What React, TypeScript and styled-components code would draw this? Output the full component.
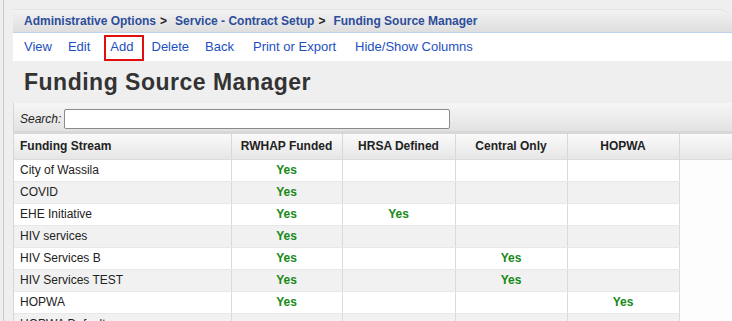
import React from 'react'
import styled, { createGlobalStyle } from 'styled-components'

const GlobalStyle = createGlobalStyle`
  html, body {
    margin: 0;
    padding: 0;
    background: #efefef;
    font-family: 'Liberation Sans', Arial, sans-serif;
    overflow: hidden;
  }
`

const Frame = styled.div`
  margin-left: 3px;
  border-left: 1px solid #c9c9c9;
  padding: 9px 0 0 9px;
  min-height: 321px;
  box-sizing: border-box;
`

const Breadcrumb = styled.div`
  height: 24px;
  display: flex;
  align-items: center;
  padding-left: 11px;
  background: linear-gradient(#f2f2f2, #dedede);
  border-top: 1px solid #e4e4e4;
  border-bottom: 1px solid #bcd3ea;
  border-top-right-radius: 14px;
  box-sizing: border-box;
  font-size: 12px;
  font-weight: bold;
  color: #2c4d9b;
  white-space: nowrap;
`

const Crumb = styled.span`
  color: #2c4d9b;
`

const Sep = styled.span`
  color: #222;
  margin: 0 8px 0 4px;
`

const MenuBar = styled.div`
  height: 28px;
  box-sizing: border-box;
  background: #fff;
  display: flex;
  align-items: flex-start;
  padding: 2px 0 0 6px;
`

const MenuLink = styled.a<{ $boxed?: boolean; $space?: number }>`
  font-size: 13px;
  color: #1d4fbf;
  text-decoration: none;
  line-height: 15px;
  padding: ${({ $boxed }) => ($boxed ? '2px 8px 5px 4px' : '2px 3px 5px')};
  margin: 0 ${({ $space }) => $space ?? 6}px 0 ${({ $boxed }) => ($boxed ? 3 : 0)}px;
  border: 2px solid ${({ $boxed }) => ($boxed ? '#e01010' : 'transparent')};
`

const Title = styled.h1`
  margin: 0;
  padding: 8px 0 0 11px;
  height: 42px;
  box-sizing: border-box;
  font-size: 23px;
  font-weight: bold;
  color: #333;
  letter-spacing: 0.5px;
`

const Panel = styled.div`
  border-left: 1px solid #d6d6d6;
  width: 760px;
`

const SearchBar = styled.div`
  height: 31px;
  display: flex;
  align-items: flex-end;
  padding: 0 0 2px 6px;
  gap: 3px;
  background: linear-gradient(#f6f6f6, #e2e2e2);
  border-bottom: 3px solid #d8d8d8;
  box-sizing: border-box;
  font-size: 12px;
  font-style: italic;
  color: #222;
`

const SearchLabel = styled.span`
  line-height: 20px;
`

const SearchInput = styled.input`
  width: 386px;
  height: 20px;
  box-sizing: border-box;
  border: 1px solid #8a8a8a;
  border-radius: 2px;
  background: #fff;
`

const Table = styled.table`
  border-collapse: collapse;
  table-layout: fixed;
  font-size: 12px;
  color: #222;
`

const HeadCell = styled.th<{ $left?: boolean; $w: number }>`
  width: ${({ $w }) => $w}px;
  height: 25px;
  padding: 0 6px;
  box-sizing: border-box;
  text-align: ${({ $left }) => ($left ? 'left' : 'center')};
  font-weight: bold;
  background: linear-gradient(#fafafa, #e6e6e6);
  border-right: 1px solid #d8d8d8;
  border-bottom: 1px solid #dcdcdc;
`

const Row = styled.tr<{ $odd: boolean }>`
  background: ${({ $odd }) => ($odd ? '#f1f1f1' : '#ffffff')};
`

const Cell = styled.td<{ $left?: boolean }>`
  height: 22px;
  padding: 0 6px;
  box-sizing: border-box;
  text-align: ${({ $left }) => ($left ? 'left' : 'center')};
  border-right: 1px solid #dadada;
  border-bottom: 1px solid #e8e8e8;
  white-space: nowrap;
`

const BlankCell = styled.td`
  background: #fdfdfd;
  border: none;
`

const Yes = styled.span`
  color: #178a17;
  font-weight: bold;
`

const columns = [
  { label: 'Funding Stream', w: 217, left: true },
  { label: 'RWHAP Funded', w: 111 },
  { label: 'HRSA Defined', w: 113 },
  { label: 'Central Only', w: 112 },
  { label: 'HOPWA', w: 112 },
]

const rows: [string, boolean, boolean, boolean, boolean][] = [
  ['City of Wassila', true, false, false, false],
  ['COVID', true, false, false, false],
  ['EHE Initiative', true, true, false, false],
  ['HIV services', true, false, false, false],
  ['HIV Services B', true, false, true, false],
  ['HIV Services TEST', true, false, true, false],
  ['HOPWA', true, false, false, true],
  ['HOPWA Default', false, false, false, false],
]

export default function App() {
  return (
    <>
      <GlobalStyle />
      <Frame>
        <Breadcrumb>
          <Crumb>Administrative Options</Crumb>
          <Sep>&gt;</Sep>
          <Crumb>Service - Contract Setup</Crumb>
          <Sep>&gt;</Sep>
          <Crumb>Funding Source Manager</Crumb>
        </Breadcrumb>
        <MenuBar>
          <MenuLink>View</MenuLink>
          <MenuLink>Edit</MenuLink>
          <MenuLink $boxed $space={3}>Add</MenuLink>
          <MenuLink>Delete</MenuLink>
          <MenuLink $space={9}>Back</MenuLink>
          <MenuLink $space={9}>Print or Export</MenuLink>
          <MenuLink>Hide/Show Columns</MenuLink>
        </MenuBar>
        <Title>Funding Source Manager</Title>
        <Panel>
          <SearchBar>
            <SearchLabel>Search:</SearchLabel>
            <SearchInput />
          </SearchBar>
          <Table>
            <thead>
              <tr>
                {columns.map((c) => (
                  <HeadCell key={c.label} $w={c.w} $left={c.left}>
                    {c.label}
                  </HeadCell>
                ))}
                <HeadCell $w={90}></HeadCell>
              </tr>
            </thead>
            <tbody>
              {rows.map(([name, ...flags], i) => (
                <Row key={name} $odd={i % 2 === 1}>
                  <Cell $left>{name}</Cell>
                  {flags.map((f, j) => (
                    <Cell key={j}>{f ? <Yes>Yes</Yes> : null}</Cell>
                  ))}
                  <BlankCell />
                </Row>
              ))}
            </tbody>
          </Table>
        </Panel>
      </Frame>
    </>
  )
}
